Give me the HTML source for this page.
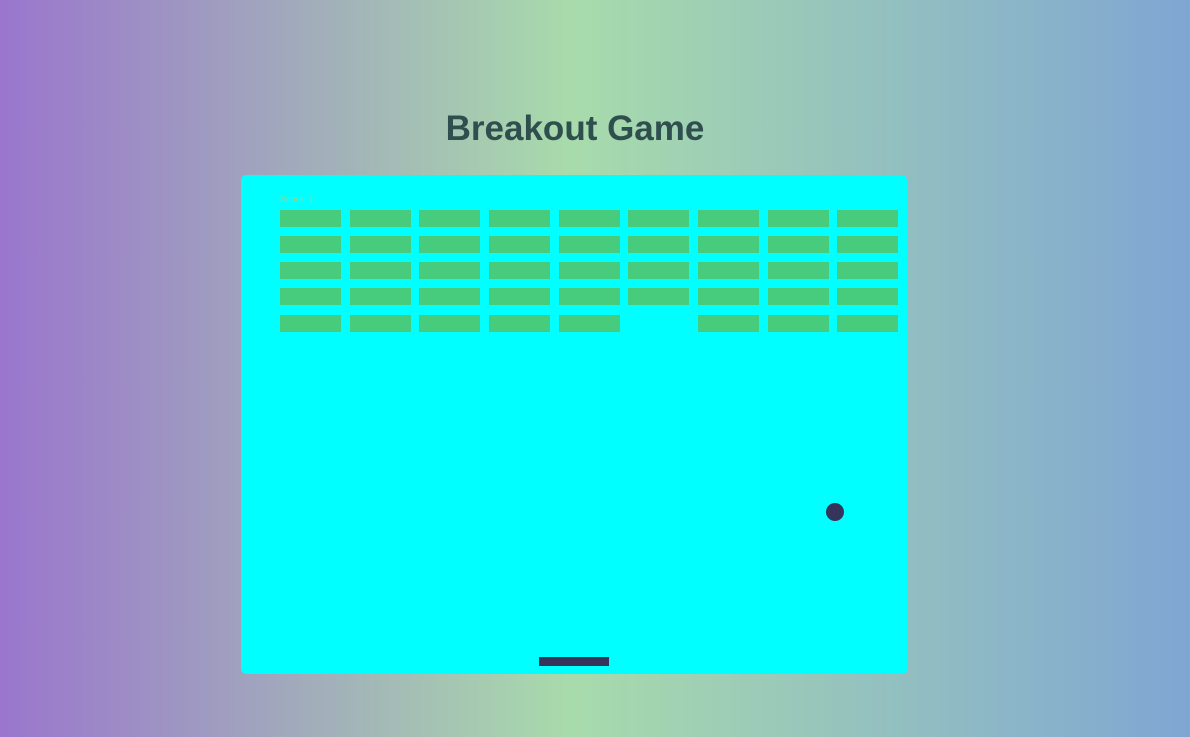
<!DOCTYPE html>
<html><head><style>
html,body{margin:0;padding:0;width:1190px;height:737px;overflow:hidden}
body{background:linear-gradient(to right,#9a76cd 0%,#a8dbab 48%,#7fa6d3 100%);position:relative;font-family:"Liberation Sans",sans-serif}
h1{position:absolute;left:0;width:1150px;margin:0;top:109px;text-align:center;font-size:35px;font-weight:bold;color:#2f4f4f}
#c{position:absolute;left:241px;top:175px;width:666px;height:499px;background:#00ffff;border-radius:5px}
.b{position:absolute;width:61px;height:17px;background:#47cb7c}
#s{position:absolute;left:280px;top:194px;font-size:9px;color:#8fd890}
#p{position:absolute;left:539px;top:657px;width:70px;height:9px;background:#35345a}
#ball{position:absolute;left:826px;top:503px;width:18px;height:18px;border-radius:50%;background:#35345a}
</style></head><body>
<h1>Breakout Game</h1>
<div id="c"></div>
<div id="s">Score: 1</div>
<div id="p"></div><div id="ball"></div>
<div class="b" style="left:280px;top:210px"></div><div class="b" style="left:350px;top:210px"></div><div class="b" style="left:419px;top:210px"></div><div class="b" style="left:489px;top:210px"></div><div class="b" style="left:559px;top:210px"></div><div class="b" style="left:628px;top:210px"></div><div class="b" style="left:698px;top:210px"></div><div class="b" style="left:768px;top:210px"></div><div class="b" style="left:837px;top:210px"></div>
<div class="b" style="left:280px;top:236px"></div><div class="b" style="left:350px;top:236px"></div><div class="b" style="left:419px;top:236px"></div><div class="b" style="left:489px;top:236px"></div><div class="b" style="left:559px;top:236px"></div><div class="b" style="left:628px;top:236px"></div><div class="b" style="left:698px;top:236px"></div><div class="b" style="left:768px;top:236px"></div><div class="b" style="left:837px;top:236px"></div>
<div class="b" style="left:280px;top:262px"></div><div class="b" style="left:350px;top:262px"></div><div class="b" style="left:419px;top:262px"></div><div class="b" style="left:489px;top:262px"></div><div class="b" style="left:559px;top:262px"></div><div class="b" style="left:628px;top:262px"></div><div class="b" style="left:698px;top:262px"></div><div class="b" style="left:768px;top:262px"></div><div class="b" style="left:837px;top:262px"></div>
<div class="b" style="left:280px;top:288px"></div><div class="b" style="left:350px;top:288px"></div><div class="b" style="left:419px;top:288px"></div><div class="b" style="left:489px;top:288px"></div><div class="b" style="left:559px;top:288px"></div><div class="b" style="left:628px;top:288px"></div><div class="b" style="left:698px;top:288px"></div><div class="b" style="left:768px;top:288px"></div><div class="b" style="left:837px;top:288px"></div>
<div class="b" style="left:280px;top:315px"></div><div class="b" style="left:350px;top:315px"></div><div class="b" style="left:419px;top:315px"></div><div class="b" style="left:489px;top:315px"></div><div class="b" style="left:559px;top:315px"></div><div class="b" style="left:698px;top:315px"></div><div class="b" style="left:768px;top:315px"></div><div class="b" style="left:837px;top:315px"></div>
</body></html>
